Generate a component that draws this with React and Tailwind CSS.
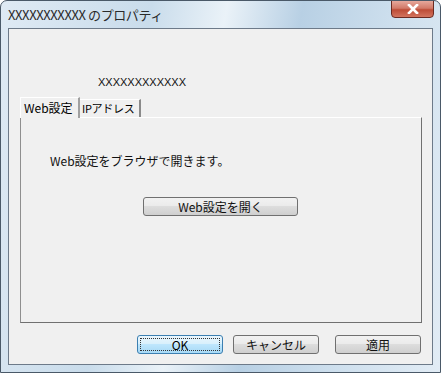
export default function App() {
  const font = { fontFamily: '"Noto Sans CJK JP", "Liberation Sans", sans-serif' };
  const btn =
    "h-[19px] rounded-[3px] border border-[#707070] bg-[linear-gradient(#f2f2f2_0%,#ebebeb_45%,#dddddd_50%,#cfcfcf_100%)] text-[12px] leading-none text-[#111] flex items-center justify-center whitespace-nowrap";
  return (
    <div
      className="relative w-[441px] h-[373px] rounded-t-[7px] border border-[#4a5968] overflow-hidden bg-[linear-gradient(100deg,#dfeaf4_0%,#c9dceb_30%,#eaf2f8_45%,#b8d0e4_60%,#cfe0ee_80%,#e2ecf5_100%)] flex flex-col"
      style={font}
    >
      <div className="h-[27px] flex items-center pl-[7px] text-[13px] text-[#2a2a2a] tracking-[-0.4px] whitespace-nowrap">
        XXXXXXXXXXX のプロパティ
      </div>
      <div className="absolute top-[-1px] right-[6px] w-[43px] h-[18px] rounded-b-[4px] border border-[#6b2a22] bg-[linear-gradient(#e6a89c_0%,#d27a69_45%,#bd4c37_55%,#d3745f_100%)] flex items-center justify-center">
        <svg width="12" height="10" viewBox="0 0 12 10">
          <path d="M2 1 L10 9 M10 1 L2 9" stroke="#ffffff" strokeWidth="2.6" strokeLinecap="square" />
        </svg>
      </div>
      <div className="mx-[7px] mb-[7px] flex-1 border border-[#6d7a89] bg-[#f0f0f0] flex flex-col">
        <div className="pt-[46px] pl-[89px] h-[68px] text-[11px] leading-[14px] text-[#111]" style={{ fontFamily: '"Liberation Sans", sans-serif' }}>
          XXXXXXXXXXXX
        </div>
        <div className="pr-[10px] pl-[11px] flex flex-col">
          <div className="flex items-end h-[20px] relative z-10">
            <div className="h-[21px] w-[60px] border-l border-t border-[#ffffff] border-r-2 border-r-[#a0a0a0] bg-[#f0f0f0] text-[12px] flex items-center pl-[3px] mb-[-1px] whitespace-nowrap">
              Web設定
            </div>
            <div className="h-[18px] w-[61px] border-t border-r-2 border-[#ffffff] border-r-[#8a8a8a] text-[11px] tracking-[-0.3px] flex items-center pl-[2px] whitespace-nowrap">
              IPアドレス
            </div>
          </div>
          <div className="h-[206px] border border-t-[#ffffff] border-l-[#8f8f8f] border-r-[#707070] border-b-[#707070] relative">
            <div className="absolute top-[36px] left-[29px] text-[12px] leading-[14px] text-[#111] whitespace-nowrap">
              Web設定をブラウザで開きます。
            </div>
            <div className="absolute top-[79px] left-[122px]">
              <div className={btn + " w-[155px]"}>Web設定を開く</div>
            </div>
          </div>
        </div>
        <div className="flex justify-end pr-[11px] pt-[12px]">
          <div className="w-[86px] h-[19px] rounded-[3px] border border-[#3c7fb1] bg-[linear-gradient(#eaf6fd_0%,#d9f0fc_45%,#bee6fd_50%,#a7d9f5_100%)] p-[2px]">
            <div className="w-full h-full border border-dotted border-[#333] flex items-center justify-center text-[12px] leading-none">OK</div>
          </div>
          <div className={btn + " w-[86px] ml-[10px]"}>キャンセル</div>
          <div className={btn + " w-[86px] ml-[16px]"}>適用</div>
        </div>
      </div>
    </div>
  );
}
